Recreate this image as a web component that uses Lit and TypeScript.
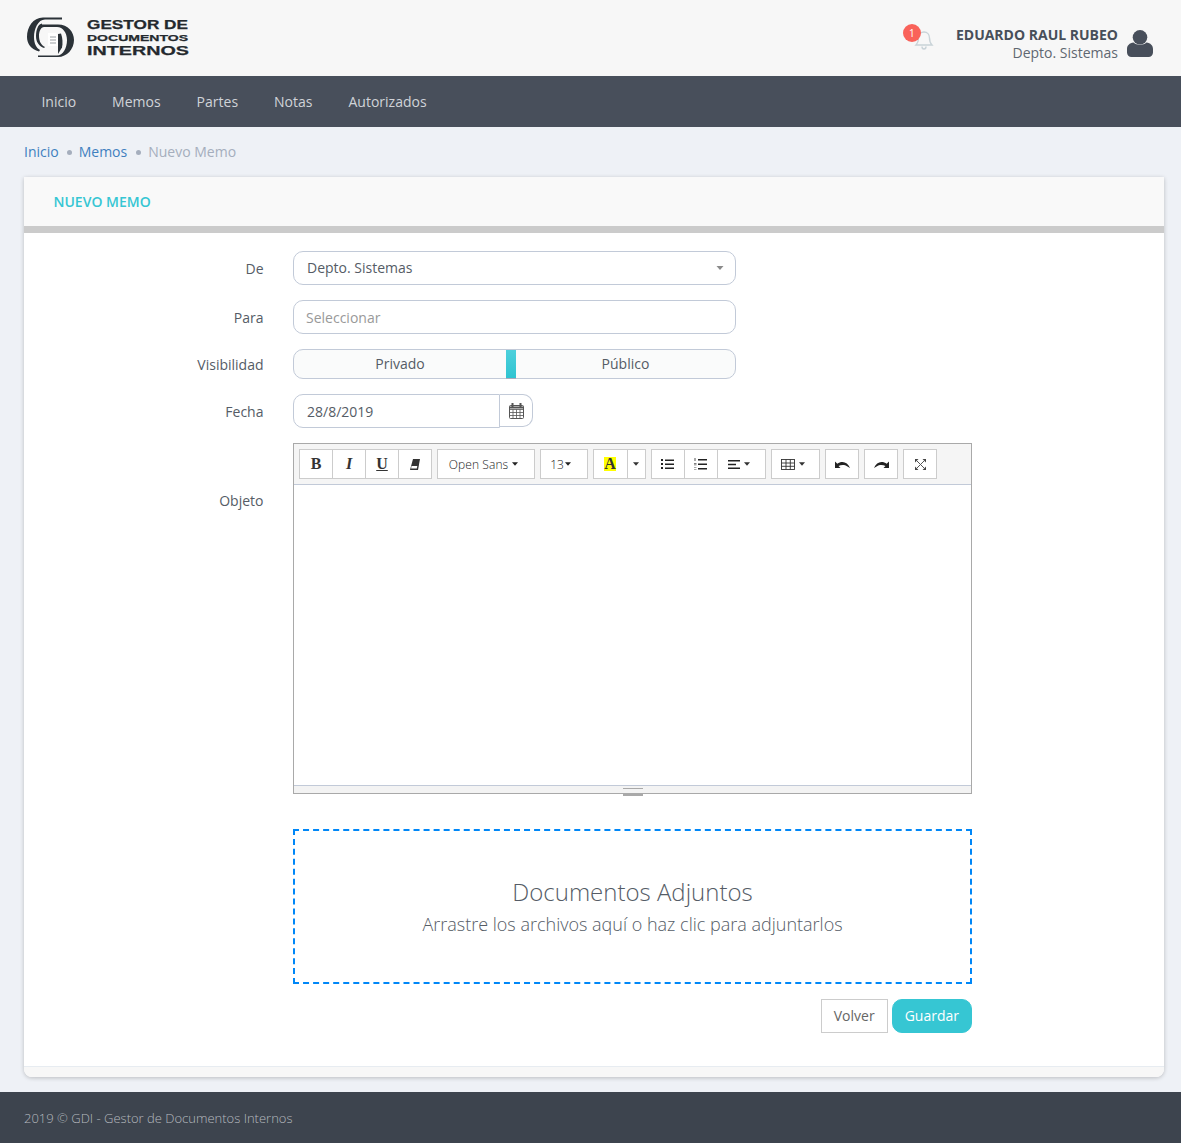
import { LitElement, html, css, svg } from 'lit';
import { customElement } from 'lit/decorators.js';

const caret = svg`<path d="M0 0h7L3.500 4z" fill="currentColor"/>`;

@customElement('app-root')
export class AppRoot extends LitElement {
  static styles = css`
    :host {
      display: block;
      font-family: 'Open Sans', sans-serif;
      font-size: 14px;
      color: #495057;
      background: #eef1f6;
    }
    * { box-sizing: border-box; }
    svg { display: block; }

    .topbar {
      height: 76px;
      background: #f7f7f7;
      display: flex;
      align-items: center;
      justify-content: space-between;
      padding: 0 28px 0 26px;
    }
    .logo text {
      font-family: 'Liberation Sans', sans-serif;
      font-weight: 700;
      fill: #24292e;
      stroke: #24292e;
      stroke-width: 0.25;
    }
    .user { display: flex; align-items: center; }
    .bell { position: relative; width: 20px; height: 24px; margin-right: 22px; margin-top: 2px; }
    .badge {
      position: absolute;
      left: -11px;
      top: -3px;
      width: 18px;
      height: 18px;
      border-radius: 50%;
      background: #f9625a;
      color: #fff;
      font-size: 10px;
      line-height: 18px;
      text-align: center;
    }
    .who { text-align: right; line-height: 18px; margin: 12px 9px 0 0; }
    .who b { display: block; font-weight: 700; color: #484f5a; }
    .who span { color: #5f6771; }
    .avatar { margin-top: 11px; }

    nav {
      height: 51px;
      background: #484f5b;
      display: flex;
      align-items: center;
      gap: 36px;
      padding-left: 41.4px;
      color: #d0d3d8;
    }

    .crumbs {
      height: 50px;
      display: flex;
      align-items: center;
      padding: 0 0 2px 24px;
      color: #a5aebd;
    }
    .crumbs a { color: #3f80bf; }
    .crumbs i {
      width: 5px;
      height: 5px;
      border-radius: 50%;
      background: #a5aebd;
      margin: 3px 7px 0 8px;
    }
    .crumbs a + i + a + i { margin-left: 9px; }

    .card {
      margin: 0 17px 0 24px;
      background: #fff;
      border-radius: 0 0 8px 8px;
      box-shadow: 0 1px 4px rgba(0, 0, 0, 0.22);
      overflow: hidden;
    }
    .card-head {
      height: 56px;
      background: #f9f9f9;
      border-bottom: 7px solid #cbcbcb;
      padding: 15px 29.500px 0;
      font-weight: 600;
      color: #36c6d3;
      line-height: 20px;
    }
    .form {
      display: grid;
      grid-template-columns: 239.500px 679px;
      column-gap: 29.500px;
      row-gap: 15px;
      padding: 18px 0 33px;
      align-items: center;
    }
    .form label { text-align: right; color: #555c66; }
    .form label.top { align-self: start; padding-top: 48px; }
    .field {
      width: 443px;
      height: 34px;
      border: 1px solid #c2cad8;
      border-radius: 10px;
      background: #fff;
      display: flex;
      align-items: center;
      justify-content: space-between;
      padding: 0 11px 0 12px;
      color: #555c66;
    }
    .field.muted { color: #999; }
    .field.select span { padding: 0 0 2px 1px; }
    .field svg { color: #8a8a8a; }

    .switch {
      width: 443px;
      height: 30px;
      border: 1px solid #c2cad8;
      border-radius: 10px;
      background: #fafbfb;
      display: flex;
      align-items: center;
      color: #555c66;
    }
    .switch span { text-align: center; padding-bottom: 2px; }
    .switch .off { width: 212px; }
    .switch .on { flex: 1; }
    .switch i {
      width: 10px;
      height: 29px;
      background: linear-gradient(#4dd0dc, #2fc4d1);
      border-bottom: 1px solid #aab;
    }

    .date { display: flex; width: 240px; height: 34px; }
    .date div:first-child {
      width: 207px;
      border: 1px solid #c2cad8;
      border-radius: 10px 0 0 10px;
      padding: 0 13px;
      line-height: 33px;
      color: #555c66;
    }
    .date div:last-child {
      flex: 1;
      height: 33px;
      border: 1px solid #c2cad8;
      border-left: 0;
      border-radius: 0 10px 10px 0;
      display: flex;
      align-items: center;
      justify-content: center;
      color: #555;
    }

    .editor { border: 1px solid #a9a9a9; height: 351px; display: flex; flex-direction: column; }
    .tools {
      height: 41px;
      background: #f5f5f5;
      border-bottom: 1px solid #c2cad8;
      display: flex;
      gap: 5px;
      padding: 5px 0 0 5px;
    }
    .group { display: flex; height: 30px; }
    .btn {
      height: 30px;
      border: 1px solid #ccc;
      margin-left: -1px;
      background: #fff;
      display: flex;
      align-items: center;
      justify-content: center;
      gap: 4px;
      color: #333;
      font-size: 12px;
    }
    .group .btn:first-child { margin-left: 0; }
    .btn.serif { font-family: 'Liberation Serif', serif; font-size: 16px; font-weight: 700; }
    .btn.font { width: 98px; gap: 4px; padding-right: 5px; letter-spacing: 0.1px; font-weight: 300; color: #222; }
    .btn.size { width: 48px; gap: 1px; padding-right: 7px; font-weight: 300; color: #222; }
    .btn.align { width: 49px; padding-right: 6px; }
    .btn.table { width: 49px; padding-right: 5px; }
    .btn .hl { background: #ff0; padding: 0 0.500px; line-height: 14px; margin-right: 1px; }
    .area { flex: 1; }
    .status {
      height: 8px;
      border-top: 1px solid #c2cad8;
      background: #f3f3f3;
      position: relative;
    }
    .status::after {
      content: '';
      position: absolute;
      left: 329px;
      top: 2px;
      width: 20px;
      height: 5px;
      border-top: 1px solid #a9a9a9;
      border-bottom: 2px solid #a9a9a9;
    }

    .drop {
      margin-top: 20px;
      height: 155px;
      border: 2px dashed #0087f7;
      text-align: center;
      font-weight: 300;
      padding-top: 44px;
      color: #555c66;
    }
    .drop h3 { margin: 0; font-size: 24px; font-weight: 300; line-height: 33px; }
    .drop p { margin: 1px 0 0; font-size: 18px; line-height: 30px; }

    .actions { display: flex; justify-content: flex-end; gap: 4px; }
    .actions div {
      height: 34px;
      line-height: 32px;
      padding: 0 12px;
      border: 1px solid #ccc;
      color: #666;
    }
    .actions .save {
      background: #36c6d3;
      border-color: #36c6d3;
      border-radius: 10px;
      color: #fff;
    }
    .card-foot { height: 11px; background: #f7f7f7; border-top: 1px solid #e7ecf1; }

    footer {
      margin-top: 15px;
      height: 51px;
      background: #3d444e;
      color: #b5b9be;
      font-size: 13px;
      font-weight: 300;
      line-height: 53px;
      padding-left: 24px;
    }
  `;

  render() {
    return html`
      <div class="topbar">
        ${this.logo()}
        <div class="user">
          <div class="bell">
            <svg width="20" height="24" viewBox="0 0 20 24" fill="none" stroke="#c9d3d8" stroke-width="1.400">
              <path d="M2 18c2-2 2.500-4 2.500-7 0-3.500 2.300-6 5.500-6s5.500 2.500 5.500 6c0 3 .5 5 2.500 7z"/>
              <path d="M8 19.500c0 1.500 1 2.500 2 2.500s2-1 2-2.500"/>
            </svg>
            <div class="badge">1</div>
          </div>
          <div class="who"><b>EDUARDO RAUL RUBEO</b><span>Depto. Sistemas</span></div>
          <svg class="avatar" width="26" height="27" viewBox="0 0 26 27" fill="#484f5b">
            <circle cx="13" cy="7.300" r="7.300"/>
            <path d="M6.500 12.500c3 3 10 3 13 0 4 .5 6.500 3 6.500 6.500v3.500c0 2.500-2 4.500-4.500 4.500h-17C2 27 0 25 0 22.500V19c0-3.500 2.500-6 6.500-6.500z"/>
          </svg>
        </div>
      </div>

      <nav>
        <span>Inicio</span><span>Memos</span><span>Partes</span><span>Notas</span><span>Autorizados</span>
      </nav>

      <div class="crumbs">
        <a>Inicio</a><i></i><a>Memos</a><i></i><span>Nuevo Memo</span>
      </div>

      <div class="card">
        <div class="card-head">NUEVO MEMO</div>
        <div class="form">
          <label>De</label>
          <div class="field select">
            <span>Depto. Sistemas</span>
            <svg width="8" height="4" viewBox="0 0 7 4">${caret}</svg>
          </div>

          <label>Para</label>
          <div class="field muted">Seleccionar</div>

          <label>Visibilidad</label>
          <div class="switch"><span class="off">Privado</span><i></i><span class="on">Público</span></div>

          <label>Fecha</label>
          <div class="date">
            <div>28/8/2019</div>
            <div>${this.calendar()}</div>
          </div>

          <label class="top">Objeto</label>
          <div class="editor">
            ${this.toolbar()}
            <div class="area"></div>
            <div class="status"></div>
          </div>

          <span></span>
          <div class="drop">
            <h3>Documentos Adjuntos</h3>
            <p>Arrastre los archivos aquí o haz clic para adjuntarlos</p>
          </div>

          <span></span>
          <div class="actions"><div>Volver</div><div class="save">Guardar</div></div>
        </div>
        <div class="card-foot"></div>
      </div>

      <footer>2019 © GDI - Gestor de Documentos Internos</footer>
    `;
  }

  logo() {
    return html`<svg class="logo" width="170" height="44" viewBox="0 0 170 44">
      <g fill="#2b3238">
        <path d="M36 1.500H17C7 1.500 1 11 1 21c0 7 4 12 12 14.500l1-1.500C10 32 8 27 8 21 8 13 12 3.500 19 3.500h17z"/>
        <path d="M16 8.500h16c10 0 16 7.500 16 15.500 0 9-7 17-16 17H12v-1.500h19c6 0 10-7.500 10-15.500 0-7-4-13-10-13H18c-3 0-5 4-5 9s2 9 6 11l-1 1c-5-2-8-6-8-12s2-12 6-12.500z"/>
        <path d="M32 18l3-.5c1.500 4 2 10 1 14l-4 6.500z"/>
      </g>
      <path d="M22 17h8l2 2v11H22z" fill="#fff"/>
      <path d="M24 21h6M24 24h6M24 27h6" stroke="#9a9fa3"/>
      <text x="61" y="13" font-size="12.500" textLength="101" lengthAdjust="spacingAndGlyphs">GESTOR DE</text>
      <text x="61" y="25" font-size="9.300" textLength="101" lengthAdjust="spacingAndGlyphs">DOCUMENTOS</text>
      <text x="61" y="39" font-size="13" textLength="102" lengthAdjust="spacingAndGlyphs">INTERNOS</text>
    </svg>`;
  }

  calendar() {
    return html`<svg width="15" height="16" viewBox="0 0 15 16" fill="none" stroke="#555">
      <rect x=".5" y="2.500" width="14" height="13" rx="1"/>
      <path d="M.5 6.500h14M.5 9.500h14M.5 12.500h14M4 6.500v9M7.500 6.500v9M11 6.500v9" stroke-width=".8"/>
      <path d="M3.500 0v4.500M11.500 0v4.500" stroke-width="2"/>
      <path d="M.5 4.500h14" stroke-width="2"/>
    </svg>`;
  }

  toolbar() {
    return html`<div class="tools">
      <div class="group">
        <div class="btn serif" style="width:34px">B</div>
        <div class="btn serif" style="width:34px"><em>I</em></div>
        <div class="btn serif" style="width:34px"><u>U</u></div>
        <div class="btn" style="width:34px">
          <svg width="10" height="11" viewBox="0 0 10 11"><path d="M3 0h7L8 11H0z" fill="#333"/><path d="M1.500 7h5.800L6.800 9.500H1.100z" fill="#fff"/></svg>
        </div>
      </div>
      <div class="group">
        <div class="btn font">Open Sans <svg width="6" height="4" viewBox="0 0 7 4">${caret}</svg></div>
      </div>
      <div class="group">
        <div class="btn size">13 <svg width="6" height="4" viewBox="0 0 7 4">${caret}</svg></div>
      </div>
      <div class="group">
        <div class="btn serif" style="width:35px"><span class="hl">A</span></div>
        <div class="btn" style="width:19px;padding-right:2px"><svg width="6" height="4" viewBox="0 0 7 4">${caret}</svg></div>
      </div>
      <div class="group">
        <div class="btn" style="width:34px;padding-right:2px">
          <svg width="13" height="10" viewBox="0 0 13 10" fill="#222"><path d="M0 0h2v2H0zM0 4h2v2H0zM0 8h2v2H0zM4 .5h9V2H4zM4 4.500h9V6H4zM4 8.500h9V10H4z"/></svg>
        </div>
        <div class="btn" style="width:34px;padding-right:2px">
          <svg width="13" height="12" viewBox="0 0 13 12" fill="#222"><path d="M4 1h9v1.500H4zM4 5.500h9V7H4zM4 10h9v1.500H4z"/><path d="M.5 0h1v3h-1zM0 5h2.500v.7H0zM0 6.500h2.500v.7H0zM0 9.500h2.500v.6H0zM0 11.400h2.500v.6H0z" fill="#555"/></svg>
        </div>
        <div class="btn align">
          <svg width="12" height="9" viewBox="0 0 12 9" fill="#222"><path d="M0 0h12v1.500H0zM0 3.700h8v1.500H0zM0 7.500h12V9H0z"/></svg>
          <svg width="6" height="4" viewBox="0 0 7 4">${caret}</svg>
        </div>
      </div>
      <div class="group">
        <div class="btn table">
          <svg width="14" height="11" viewBox="0 0 14 11" fill="none" stroke="#333" stroke-width=".9"><rect x=".5" y=".5" width="13" height="10"/><path d="M.5 4h13M.5 7.300h13M5 .5v10M9.300 .5v10"/></svg>
          <svg width="6" height="4" viewBox="0 0 7 4">${caret}</svg>
        </div>
      </div>
      <div class="group">
        <div class="btn" style="width:34px">
          <svg width="15" height="7" viewBox="0 0 15 7" fill="#222"><path d="M0 .5V7h5.500L3.500 5C6 3.500 10 3.500 12 5.200L15 7C13.500 3 10.500 1 7.500 1 5.500 1 3.800 1.600 2.300 2.800z"/></svg>
        </div>
      </div>
      <div class="group">
        <div class="btn" style="width:34px">
          <svg width="15" height="7" viewBox="0 0 15 7" fill="#222"><path d="M15 .5V7H9.500l2-2C9 3.500 5 3.500 3 5.200L0 7C1.500 3 4.500 1 7.500 1c2 0 3.700.6 5.200 1.800z"/></svg>
        </div>
      </div>
      <div class="group">
        <div class="btn" style="width:34px">
          <svg width="11" height="11" viewBox="0 0 11 11" fill="#444">
            <path d="M0 0h3.500L0 3.500zM11 0v3.500L7.500 0zM0 11V7.500L3.500 11zM11 11H7.500L11 7.500z"/>
            <path d="M2 2l7 7M9 2l-7 7" stroke="#555" stroke-width="1"/>
          </svg>
        </div>
      </div>
    </div>`;
  }
}
